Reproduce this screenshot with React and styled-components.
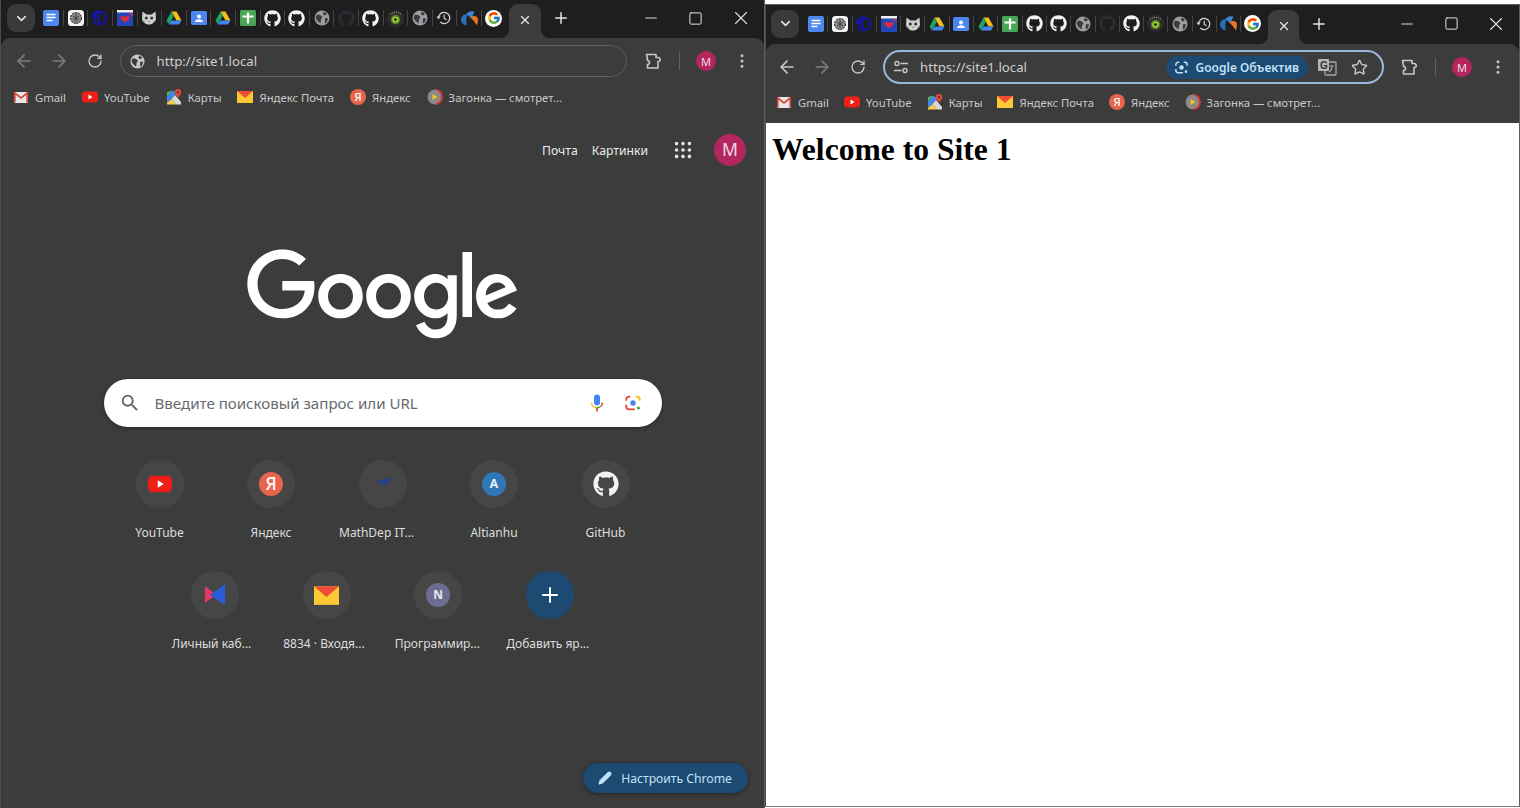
import React from 'react';
import styled, { createGlobalStyle } from 'styled-components';
import { ArrowLeft, ArrowRight, RotateCw, EllipsisVertical, X, Minus, Square, Plus, ChevronDown, Star, Pencil, Grip } from 'lucide-react';
import { FaGithub } from 'react-icons/fa';
import { FcGoogle } from 'react-icons/fc';
import { MdSearch } from 'react-icons/md';

const GlobalStyle = createGlobalStyle`
  html, body {
    margin: 0;
    padding: 0;
    background: #fff;
    overflow: hidden;
  }
  * { box-sizing: border-box; }
`;

const Page = styled.div`
  display: flex;
  align-items: flex-start;
  width: 1520px;
  height: 808px;
  font-family: "Noto Sans", Roboto, sans-serif;
`;

const Window = styled.div`
  display: flex;
  flex-direction: column;
  flex: none;
  width: ${p => p.$width}px;
  height: ${p => p.$height}px;
  margin-top: ${p => p.$top}px;
  background: #1e1e1e;
  border-left: 1px solid #4b4b4b;
  border-right: 1px solid #5c5c5c;
  border-top: ${p => (p.$top ? '1px solid #5c5c5c' : '0')};
  border-bottom: ${p => (p.$top ? '1px solid #7a7a7a' : '0')};
`;

const TabStrip = styled.div`
  display: flex;
  align-items: center;
  flex: none;
  height: ${p => p.$height}px;
  padding: 0 1px 2px ${p => p.$inset}px;
`;

const TabSearch = styled.div`
  display: flex;
  align-items: center;
  justify-content: center;
  flex: none;
  width: 28px;
  height: 28px;
  border-radius: 9px;
  background: #3a3a3a;
  color: #e3e3e3;
`;

const FavList = styled.div`
  display: flex;
  margin-left: ${p => p.$gap}px;
`;

const FavSlot = styled.div`
  position: relative;
  display: flex;
  align-items: center;
  justify-content: center;
  width: ${p => p.$step}px;
  height: 18px;
  &:not(:last-child)::after {
    content: '';
    position: absolute;
    right: -0.5px;
    top: 1px;
    width: 1px;
    height: 16px;
    background: #444;
  }
`;

const ActiveTab = styled.div`
  position: relative;
  display: flex;
  align-items: center;
  justify-content: center;
  flex: none;
  align-self: flex-end;
  width: ${p => p.$width}px;
  height: 34px;
  margin: 0 0 -2px 3px;
  padding-bottom: 3px;
  background: #3c3c3c;
  border-radius: 9px 9px 0 0;
  color: #e3e3e3;
  &::before, &::after {
    content: '';
    position: absolute;
    bottom: 0;
    width: 9px;
    height: 9px;
  }
  &::before {
    left: -9px;
    background: radial-gradient(circle at 0 0, transparent 9px, #3c3c3c 9.5px);
  }
  &::after {
    right: -9px;
    background: radial-gradient(circle at 100% 0, transparent 9px, #3c3c3c 9.5px);
  }
`;

const NewTab = styled.div`
  display: flex;
  align-items: center;
  justify-content: center;
  flex: none;
  width: 28px;
  height: 28px;
  margin-left: 6px;
  color: #e3e3e3;
`;

const Controls = styled.div`
  display: flex;
  margin-left: auto;
  color: #e3e3e3;
`;

const ControlButton = styled.div`
  display: flex;
  align-items: center;
  justify-content: center;
  width: ${p => p.$width}px;
  height: 30px;
`;

const Toolbar = styled.div`
  display: flex;
  align-items: center;
  flex: none;
  height: 46px;
  padding: 0 ${p => p.$padRight}px 0 ${p => p.$padLeft}px;
  background: #3c3c3c;
  border-radius: 9px 9px 0 0;
  color: #c7c7c7;
`;

const ToolButton = styled.div`
  display: flex;
  align-items: center;
  justify-content: center;
  flex: none;
  width: ${p => p.$width || 36}px;
  height: 32px;
  color: ${p => (p.$dim ? '#7c7c7c' : '#c7c7c7')};
`;

const Omnibox = styled.div`
  display: flex;
  align-items: center;
  flex: 1;
  height: ${p => (p.$focused ? 34 : 32)}px;
  margin: 0 ${p => (p.$focused ? 7 : 8)}px 0 ${p => (p.$focused ? 7.5 : 7)}px;
  padding: 0 ${p => (p.$focused ? 7 : 12)}px 0 ${p => (p.$focused ? 8 : 9)}px;
  background: #3c3c3c;
  border: ${p => (p.$focused ? '2px solid #9db6de' : '1px solid #5f5f5f')};
  border-radius: 17px;
`;

const OmniIcon = styled.div`
  display: flex;
  align-items: center;
  justify-content: center;
  flex: none;
  width: 16px;
  margin-right: 11px;
`;

const UrlText = styled.span`
  font-size: 13.2px;
  color: #d0d0d0;
  white-space: nowrap;
`;

const LensChip = styled.div`
  display: flex;
  align-items: center;
  gap: 6px;
  height: 23px;
  margin: 0 3px 0 auto;
  padding: 0 9px 0 8px;
  border-radius: 12px;
  background: #1c4a73;
  color: #c2e0f8;
  font-size: 12px;
  font-weight: 600;
  white-space: nowrap;
`;

const ChipAction = styled.div`
  display: flex;
  align-items: center;
  justify-content: center;
  flex: none;
  width: 32px;
  color: #c7c7c7;
`;

const ToolDivider = styled.div`
  flex: none;
  width: 1px;
  height: 18px;
  margin: 0 8px;
  background: #5f5f5f;
`;

const Avatar = styled.div`
  display: flex;
  align-items: center;
  justify-content: center;
  flex: none;
  width: ${p => p.$size}px;
  height: ${p => p.$size}px;
  border-radius: 50%;
  background: #b3265e;
  color: #f3d9e3;
  font-size: ${p => p.$size * 0.55}px;
  line-height: 1;
`;

const Bookmarks = styled.div`
  display: flex;
  align-items: center;
  flex: none;
  gap: ${p => p.$gap}px;
  height: ${p => p.$height}px;
  padding: 0 0 ${p => p.$pad}px ${p => p.$inset}px;
  background: #3c3c3c;
`;

const Bookmark = styled.div`
  display: flex;
  align-items: center;
  gap: 6px;
  font-size: 11.3px;
  color: #c9c9c9;
  white-space: nowrap;
`;

const NewTabPage = styled.main`
  display: flex;
  flex-direction: column;
  align-items: center;
  flex: 1;
  min-height: 0;
  background: #3c3c3c;
`;

const TopLinks = styled.nav`
  display: flex;
  align-items: center;
  align-self: stretch;
  justify-content: flex-end;
  height: 32px;
  margin-top: 22px;
  padding-right: 18px;
  font-size: 12.2px;
  color: #ececec;
`;

const TopLink = styled.span`
  margin-left: 14px;
`;

const AppsButton = styled.div`
  display: flex;
  align-items: center;
  justify-content: center;
  width: 24px;
  margin: 0 19px 0 23px;
  color: #e3e3e3;
`;

const Logo = styled.svg`
  display: block;
  width: 272px;
  height: 92px;
  margin-top: 83px;
  fill: #fff;
`;

const SearchBox = styled.div`
  display: flex;
  align-items: center;
  width: 558px;
  height: 48px;
  margin-top: 38px;
  padding: 0 11px 0 15px;
  border-radius: 24px;
  background: #fff;
  box-shadow: 0 1px 4px rgba(0, 0, 0, 0.3);
  color: #5f6368;
`;

const SearchHint = styled.span`
  flex: 1;
  margin-left: 14px;
  font-size: 15.1px;
  color: #666a70;
`;

const SearchAction = styled.div`
  display: flex;
  align-items: center;
  justify-content: center;
  width: 36px;
`;

const Shortcuts = styled.div`
  display: flex;
  flex-wrap: wrap;
  justify-content: center;
  width: 558px;
  margin-top: 33px;
`;

const Tile = styled.div`
  display: flex;
  flex-direction: column;
  align-items: center;
  width: 111.5px;
  height: 111px;
`;

const TileCircle = styled.div`
  display: flex;
  align-items: center;
  justify-content: center;
  width: 48px;
  height: 48px;
  border-radius: 50%;
  background: ${p => (p.$add ? '#1c4a73' : '#464646')};
  color: #fff;
`;

const TileLabel = styled.div`
  width: 87px;
  margin-top: 17px;
  font-size: 12px;
  line-height: 16px;
  color: #dedede;
  text-align: ${p => (p.$cut ? 'left' : 'center')};
  white-space: nowrap;
`;

const Customize = styled.div`
  display: flex;
  align-items: center;
  gap: 9px;
  align-self: flex-end;
  height: 30px;
  margin: auto 16px 15px 0;
  padding: 0 16px 0 15px;
  border-radius: 15px;
  background: #1c4a73;
  box-shadow: 0 1px 4px rgba(0, 0, 0, 0.4);
  color: #c2e0f8;
  font-size: 12.2px;
  white-space: nowrap;
`;

const SitePage = styled.main`
  flex: 1;
  min-height: 0;
  padding: 9px 6px;
  background: #fff;
`;

const SiteTitle = styled.h1`
  margin: 0;
  font-family: "Liberation Serif", serif;
  font-size: 31.6px;
  font-weight: 700;
  color: #000;
`;

const LetterBadge = styled.span`
  display: inline-flex;
  align-items: center;
  justify-content: center;
  flex: none;
  width: ${p => p.$size}px;
  height: ${p => p.$size}px;
  border-radius: 50%;
  background: ${p => p.$bg};
  color: ${p => p.$color || '#fff'};
  font-size: ${p => p.$size * (p.$scale || 0.6)}px;
  font-weight: ${p => p.$weight || 700};
  line-height: 1;
`;

// -- favicons --
const Svg = ({ size = 16, view = 16, children }) => (
  <svg width={size} height={size} viewBox={`0 0 ${view} ${view}`} fill="none">{children}</svg>
);

const DocsIcon = () => (
  <Svg>
    <rect width="16" height="16" rx="2" fill="#4d86f0" />
    <path d="M3.5 4.5h9M3.5 7.5h9M3.5 10.5h6" stroke="#fff" strokeWidth="1.4" />
  </Svg>
);
const GptIcon = () => (
  <Svg>
    <rect width="16" height="16" rx="3.5" fill="#f5f5f5" />
    <circle cx="8" cy="8" r="5.5" fill="#8a8a8a" />
    <circle cx="8" cy="8" r="5.5" stroke="#1c1c1c" strokeWidth="1" strokeDasharray="2 1" />
    <path d="M5 6l6 4M11 6l-6 4M8 3.5v9" stroke="#333" strokeWidth="0.8" />
  </Svg>
);
const InitialsIcon = () => (
  <Svg>
    <path d="M3.5 1.500v13M6.500 1v14M6.500 1.500c7 0 8 3 8 6.500s-1 6.500-8 6.500M1 8c0-4 2-6 5.500-6.500" stroke="#1212d8" strokeWidth="1.600" />
  </Svg>
);
const HeartFlagIcon = () => (
  <Svg>
    <rect width="16" height="16" fill="#2446b8" />
    <rect width="16" height="2.5" fill="#eee" />
    <path d="M8 12.5L3.5 8.5c-1-1.500.8-3.200 2.500-2.400L8 7.200l2-1.100c1.700-.8 3.500.9 2.500 2.400z" fill="#e12b38" />
    <path d="M12 3l4 2.500" stroke="#b23a55" strokeWidth="1.500" />
  </Svg>
);
const CatIcon = () => (
  <Svg>
    <path d="M1.500 1.500l4 3h5l4-3 .5 7.500C14 12.500 11 14.500 8 14.500S2 12.500 1 9z" fill="#cfcfcf" />
    <circle cx="5.300" cy="8" r="1.500" fill="#333" />
    <circle cx="10.700" cy="8" r="1.500" fill="#333" />
    <path d="M7 11h2l-1 1z" fill="#333" />
    <path d="M1 11l3 .5M15 11l-3 .5" stroke="#777" strokeWidth="0.7" />
  </Svg>
);
const DriveIcon = () => (
  <Svg>
    <path d="M5.500 1.500h5l5 9h-5z" fill="#f8bd1c" />
    <path d="M5.500 1.500L.5 10.500 3 14.500l5-9z" fill="#1ea362" />
    <path d="M3 14.500h10l2.500-4h-10z" fill="#4285f4" />
  </Svg>
);
const ContactsIcon = () => (
  <Svg>
    <rect y="1" width="16" height="14" rx="1.500" fill="#4d86f0" />
    <circle cx="8" cy="6.500" r="2" fill="#fff" />
    <path d="M4 12c0-2 2-2.800 4-2.800s4 .8 4 2.800z" fill="#fff" />
  </Svg>
);
const SheetIcon = () => (
  <Svg>
    <rect width="16" height="16" rx="1.500" fill="#4aa557" />
    <path d="M8 2.500v11M2.500 6.500h11" stroke="#fff" strokeWidth="2.200" />
  </Svg>
);
const GlobeIcon = ({ size = 16, bg = '#9a9ea3', land = '#3c3c3c' }) => (
  <Svg size={size}>
    <circle cx="8" cy="8" r="7.500" fill={bg} />
    <path d="M3 4.500l3 .5 2.500 2-1.500 2.500-.5 4L3 10.500 1.500 7.500zM9.500 1.500l3.500 2-1.500 2-2.500-1zM11 8l3.200.5-1.500 4-2 1z" fill={land} />
  </Svg>
);
const DarkRepoIcon = () => <FaGithub size={17} color="#2a2d33" />;
const LensBallIcon = () => (
  <Svg size={17}>
    <circle cx="8" cy="8" r="8" fill="#2c2c2c" />
    <circle cx="8" cy="9" r="4.500" fill="#5b7a2c" />
    <circle cx="8" cy="9" r="3" fill="#93d62f" />
    <circle cx="8" cy="9" r="1.300" fill="#111" />
    <path d="M3 4c3-2.500 7-2.500 10 0" stroke="#9a9a9a" strokeWidth="1" strokeDasharray="1 1" />
  </Svg>
);
const HistoryIcon = () => (
  <Svg>
    <path d="M2.600 8a5.600 5.600 0 1 1 1.700 4" stroke="#d5d5d5" strokeWidth="1.300" />
    <path d="M.4 6.600h4.200L2.600 9.200z" fill="#d5d5d5" />
    <path d="M8.200 4.800v3.600l2.400 1.400" stroke="#d5d5d5" strokeWidth="1.200" />
  </Svg>
);
const SwirlIcon = () => (
  <Svg size={17}>
    <path d="M0 9c0-3.500 3-5.500 6.500-5 -1.500 3-2 6-1 10.500C2.500 14 0 12.500 0 9z" fill="#2b6fb5" />
    <path d="M5 4C6.500 1.500 9.500 .5 12.500 1.500c-.5 2.500-2 4.500-3.500 6.500C8.500 6.500 7 5 5 4z" fill="#3a84cf" />
    <path d="M9 7c2-1.800 5-1.800 6.800.5.500 2.500-.3 5-.8 7-1.500-2.500-3.500-5-6-7.500z" fill="#e8742a" />
  </Svg>
);
const GoogleIcon = () => (
  <LetterBadge $size={17} $bg="#fff"><FcGoogle size={14} /></LetterBadge>
);
const WhiteRepoIcon = () => <FaGithub size={17} color="#f2f2f2" />;

const favicons = [DocsIcon, GptIcon, InitialsIcon, HeartFlagIcon, CatIcon, DriveIcon, ContactsIcon, DriveIcon, SheetIcon,
  WhiteRepoIcon, WhiteRepoIcon, GlobeIcon, DarkRepoIcon, WhiteRepoIcon, LensBallIcon, GlobeIcon, HistoryIcon, SwirlIcon, GoogleIcon];

// -- bookmark icons --
const GmailIcon = () => (
  <Svg>
    <rect x="1" y="3" width="14" height="11" rx="1" fill="#e8e8e8" />
    <path d="M1.800 13.500V4l6.200 5 6.200-5v9.500" stroke="#d9463c" strokeWidth="1.700" />
  </Svg>
);
const YoutubeIcon = ({ size = 16 }) => (
  <Svg size={size}>
    <rect y="2.500" width="16" height="11" rx="3" fill="#ee1f17" />
    <path d="M6.500 5.500v5l4-2.500z" fill="#fff" />
  </Svg>
);
const MapsIcon = () => (
  <Svg>
    <path d="M1 3l6-1.500L1 8z" fill="#48b564" />
    <path d="M1 8l6-6.500 3 3.500L1 14z" fill="#4285f4" />
    <path d="M1 14v1.500h9L5.500 10z" fill="#f7d046" />
    <path d="M5.500 10L10 15.500h5V13L9 6z" fill="#d9d9d9" />
    <path d="M12 0a3.200 3.200 0 0 0-3.200 3.200C8.800 5.500 12 8.500 12 8.500s3.200-3 3.200-5.300A3.200 3.200 0 0 0 12 0z" fill="#df4a3c" />
    <circle cx="12" cy="3.200" r="1.100" fill="#7d2017" />
  </Svg>
);
const MailIcon = ({ size = 16 }) => (
  <Svg size={size}>
    <rect y="2" width="16" height="12" fill="#fcc934" />
    <path d="M0 2h16L8 9z" fill="#ee4d38" />
  </Svg>
);
const ZagonkaIcon = () => (
  <Svg>
    <circle cx="8" cy="8" r="7.500" fill="#8a8a8a" />
    <path d="M9 .7a7.500 7.500 0 0 1 0 14.600" stroke="#d8372e" strokeWidth="1.800" />
    <path d="M5.500 5v6l5-3z" fill="#f2c61f" />
  </Svg>
);

const bookmarks = [
  { label: 'Gmail', icon: <GmailIcon /> },
  { label: 'YouTube', icon: <YoutubeIcon /> },
  { label: 'Карты', icon: <MapsIcon /> },
  { label: 'Яндекс Почта', icon: <MailIcon /> },
  { label: 'Яндекс', icon: <LetterBadge $size={16} $bg="#e8644a" $scale={0.72} $weight={500}>Я</LetterBadge> },
  { label: 'Загонка — смотрет...', icon: <ZagonkaIcon /> },
];

// -- toolbar drawings --
const ExtensionIcon = () => (
  <Svg size={20} view={20}>
    <path d="M3.500 3.500h9.500v3h2.200a2 2 0 0 1 2 2 2 2 0 0 1-2 2H15v6.500H4.500v-3.500a2 2 0 0 0 0-4V8.500z" stroke="#c7c7c7" strokeWidth="1.600" strokeLinejoin="round" />
  </Svg>
);
const TuneIcon = () => (
  <Svg>
    <circle cx="4" cy="4.500" r="2" stroke="#c7c7c7" strokeWidth="1.400" />
    <path d="M7.500 4.500H15M1 11.500h7.500" stroke="#c7c7c7" strokeWidth="1.400" />
    <circle cx="12" cy="11.500" r="2" stroke="#c7c7c7" strokeWidth="1.400" />
  </Svg>
);
const LensIcon = ({ size = 16, color }) => (
  <Svg size={size} view={20}>
    <path d="M7 3H5.500A3 3 0 0 0 2.500 6v1.500" stroke={color || '#ea4335'} strokeWidth="2" />
    <path d="M13 3h1.500a3 3 0 0 1 3 3v1.500" stroke={color || '#fbbc05'} strokeWidth="2" />
    <path d="M2.500 12v2a3 3 0 0 0 3 3H12" stroke={color || '#ea4335'} strokeWidth="2" />
    <circle cx="10" cy="10" r="3" fill={color || '#4285f4'} />
    <circle cx="16" cy="15.500" r="1.700" fill={color || '#34a853'} />
  </Svg>
);
const MicIcon = () => (
  <Svg size={20} view={20}>
    <rect x="7" y="1.500" width="6" height="11" rx="3" fill="#4285f4" />
    <path d="M4.500 9.500c0 3 2.400 5.300 5.500 5.300" stroke="#fbbc05" strokeWidth="1.500" />
    <path d="M15.500 9.500c0 1.500-.7 3-1.800 4" stroke="#ea4335" strokeWidth="1.500" />
    <path d="M10 15v3.500" stroke="#ea4335" strokeWidth="1.800" />
    <path d="M13.700 13.500a5.500 5.500 0 0 1-3.700 1.300" stroke="#34a853" strokeWidth="1.500" />
  </Svg>
);
const TranslateIcon = () => (
  <Svg size={20} view={20}>
    <rect x="8" y="5" width="11" height="13" rx="1" stroke="#a8a8a8" strokeWidth="1.300" />
    <rect x="1" y="2" width="11" height="12" rx="1" fill="#b5b5b5" />
    <text x="3" y="12" fontSize="10" fontWeight="700" fontFamily="Liberation Sans, sans-serif" fill="#333">G</text>
    <path d="M12 9h5M15 9c0 3-1.500 5-3 6" stroke="#a8a8a8" strokeWidth="1.100" />
  </Svg>
);

// -- shortcut icons --
const MathDepIcon = () => (
  <Svg size={24} view={24}>
    <path d="M3 11l5-1-2 3 5-3-2 4 5-3-1 3 8-6-4 1 5-3-10 1-9 3z" fill="#263f8a" />
    <circle cx="4" cy="11" r="1" fill="#b5233a" />
  </Svg>
);
const CabinetIcon = () => (
  <Svg size={24} view={24}>
    <path d="M2 3l11 8.500L2 20z" fill="#e23a63" />
    <path d="M22 1v21L7 12z" fill="#2a5bd7" />
  </Svg>
);

const shortcuts = [
  { label: 'YouTube', icon: <YoutubeIcon size={24} /> },
  { label: 'Яндекс', icon: <LetterBadge $size={24} $bg="#e8644a" $scale={0.72} $weight={500}>Я</LetterBadge> },
  { label: 'MathDep IT...', cut: true, icon: <MathDepIcon /> },
  { label: 'Altianhu', icon: <LetterBadge $size={24} $bg="#2f78b7" $color="#e8eef5" $scale={0.5}>A</LetterBadge> },
  { label: 'GitHub', icon: <FaGithub size={26} color="#f2f2f2" /> },
  { label: 'Личный каб...', cut: true, icon: <CabinetIcon /> },
  { label: '8834 · Входя...', cut: true, icon: <MailIcon size={25} /> },
  { label: 'Программир...', cut: true, icon: <LetterBadge $size={24} $bg="#6d6d92" $color="#e8e8ef" $scale={0.5}>N</LetterBadge> },
  { label: 'Добавить яр...', cut: true, add: true, icon: <Plus size={24} strokeWidth={2} /> },
];

const BrowserChrome = ({ layout, focused, url, icon, children }) => (
  <Window $width={layout.width} $height={layout.height} $top={layout.top}>
    <TabStrip $height={layout.stripHeight} $inset={layout.inset}>
      <TabSearch><ChevronDown size={15} strokeWidth={2.5} /></TabSearch>
      <FavList $gap={layout.favGap}>
        {favicons.map((Icon, index) => (
          <FavSlot key={index} $step={layout.favStep}><Icon /></FavSlot>
        ))}
      </FavList>
      <ActiveTab $width={layout.tabWidth}><X size={14} strokeWidth={2.4} /></ActiveTab>
      <NewTab><Plus size={18} strokeWidth={2} /></NewTab>
      <Controls>
        <ControlButton $width={layout.controlWidth}><Minus size={18} strokeWidth={1.3} /></ControlButton>
        <ControlButton $width={layout.controlWidth}><Square size={15} strokeWidth={1.6} /></ControlButton>
        <ControlButton $width={layout.controlWidth}><X size={22} strokeWidth={1.2} /></ControlButton>
      </Controls>
    </TabStrip>
    <Toolbar $padLeft={layout.toolLeft} $padRight={layout.toolRight}>
      <ToolButton $width={35.5} $dim={!focused}><ArrowLeft size={20} /></ToolButton>
      <ToolButton $width={35.5} $dim><ArrowRight size={20} /></ToolButton>
      <ToolButton $width={35.5}><RotateCw size={16} /></ToolButton>
      <Omnibox $focused={focused}>
        <OmniIcon>{icon}</OmniIcon>
        <UrlText>{url}</UrlText>
        {focused && (
          <>
            <LensChip><LensIcon size={15} color="#c2e0f8" />Google Объектив</LensChip>
            <ChipAction><TranslateIcon /></ChipAction>
            <ChipAction><Star size={17} /></ChipAction>
          </>
        )}
      </Omnibox>
      <ToolButton><ExtensionIcon /></ToolButton>
      <ToolDivider />
      <ToolButton><Avatar $size={20}>M</Avatar></ToolButton>
      <ToolButton><EllipsisVertical size={18} /></ToolButton>
    </Toolbar>
    <Bookmarks $height={layout.barHeight} $pad={layout.barPad} $inset={layout.barInset} $gap={layout.barGap}>
      {bookmarks.map(item => (
        <Bookmark key={item.label}>{item.icon}{item.label}</Bookmark>
      ))}
    </Bookmarks>
    {children}
  </Window>
);

const leftLayout = { width: 765, height: 808, top: 0, stripHeight: 38, inset: 6, favGap: 3.7, favStep: 24.6, tabWidth: 32, controlWidth: 45, toolLeft: 5, toolRight: 4, barHeight: 28, barPad: 2, barInset: 12, barGap: 16 };
const rightLayout = { width: 755, height: 803, top: 4, stripHeight: 39, inset: 5, favGap: 4.5, favStep: 24.3, tabWidth: 31, controlWidth: 44.5, toolLeft: 3, toolRight: 3, barHeight: 33, barPad: 9, barInset: 10, barGap: 15 };

const App = () => (
  <Page>
    <GlobalStyle />
    <BrowserChrome layout={leftLayout} url="http://site1.local" icon={<GlobeIcon size={15} bg="#c7c7c7" land="#3c3c3c" />}>
      <NewTabPage>
        <TopLinks>
          <TopLink>Почта</TopLink>
          <TopLink>Картинки</TopLink>
          <AppsButton><Grip size={22} /></AppsButton>
          <Avatar $size={32}>M</Avatar>
        </TopLinks>
        <Logo viewBox="0 0 272 92" aria-label="Google">
          <path d="M115.75 47.18c0 12.77-9.99 22.18-22.25 22.18s-22.25-9.41-22.25-22.18C71.25 34.32 81.24 25 93.5 25s22.25 9.32 22.25 22.18zm-9.74 0c0-7.98-5.79-13.44-12.51-13.44S80.99 39.2 80.99 47.18c0 7.9 5.79 13.44 12.51 13.44s12.51-5.55 12.51-13.44z" />
          <path d="M163.75 47.18c0 12.77-9.99 22.18-22.25 22.18s-22.25-9.41-22.25-22.18c0-12.85 9.99-22.18 22.25-22.18s22.25 9.32 22.25 22.18zm-9.74 0c0-7.98-5.79-13.44-12.51-13.44s-12.51 5.46-12.51 13.44c0 7.9 5.79 13.44 12.51 13.44s12.51-5.55 12.51-13.44z" />
          <path d="M209.75 26.34v39.82c0 16.38-9.66 23.07-21.08 23.07-10.75 0-17.22-7.19-19.66-13.07l8.48-3.53c1.51 3.61 5.21 7.87 11.17 7.87 7.31 0 11.84-4.51 11.84-13v-3.19h-.34c-2.18 2.69-6.38 5.04-11.68 5.04-11.09 0-21.25-9.66-21.25-22.09 0-12.52 10.16-22.26 21.25-22.26 5.29 0 9.49 2.35 11.68 4.96h.34v-3.61h9.25zm-8.56 20.92c0-7.81-5.21-13.52-11.84-13.52-6.72 0-12.35 5.71-12.35 13.52 0 7.73 5.63 13.36 12.35 13.36 6.63 0 11.84-5.63 11.84-13.36z" />
          <path d="M225 3v65h-9.5V3h9.5z" />
          <path d="M262.02 54.48l7.56 5.04c-2.44 3.61-8.32 9.83-18.48 9.83-12.6 0-22.01-9.74-22.01-22.18 0-13.19 9.49-22.18 20.92-22.18 11.51 0 17.14 9.16 18.98 14.11l1.01 2.52-29.65 12.28c2.27 4.45 5.8 6.72 10.75 6.72 4.96 0 8.4-2.44 10.92-6.14zm-23.27-7.98l19.82-8.23c-1.09-2.77-4.37-4.7-8.23-4.7-4.95 0-11.84 4.37-11.59 12.93z" />
          <path d="M35.29 41.41V32H67c.31 1.64.47 3.58.47 5.68 0 7.06-1.93 15.79-8.15 22.01-6.05 6.3-13.78 9.66-24.02 9.66C16.32 69.35.36 53.89.36 34.91.36 15.93 16.32.47 35.3.47c10.5 0 17.98 4.12 23.6 9.49l-6.64 6.64c-4.03-3.78-9.49-6.72-16.97-6.72-13.86 0-24.7 11.17-24.7 25.03 0 13.86 10.84 25.03 24.7 25.03 8.99 0 14.11-3.61 17.39-6.89 2.66-2.66 4.41-6.46 5.1-11.65l-22.49.01z" />
        </Logo>
        <SearchBox>
          <MdSearch size={22} />
          <SearchHint>Введите поисковый запрос или URL</SearchHint>
          <SearchAction><MicIcon /></SearchAction>
          <SearchAction><LensIcon size={18} /></SearchAction>
        </SearchBox>
        <Shortcuts>
          {shortcuts.map(item => (
            <Tile key={item.label}>
              <TileCircle $add={item.add}>{item.icon}</TileCircle>
              <TileLabel $cut={item.cut}>{item.label}</TileLabel>
            </Tile>
          ))}
        </Shortcuts>
        <Customize><Pencil size={14} fill="#c2e0f8" />Настроить Chrome</Customize>
      </NewTabPage>
    </BrowserChrome>
    <BrowserChrome layout={rightLayout} focused url="https://site1.local" icon={<TuneIcon />}>
      <SitePage>
        <SiteTitle>Welcome to Site 1</SiteTitle>
      </SitePage>
    </BrowserChrome>
  </Page>
);

export default App;
